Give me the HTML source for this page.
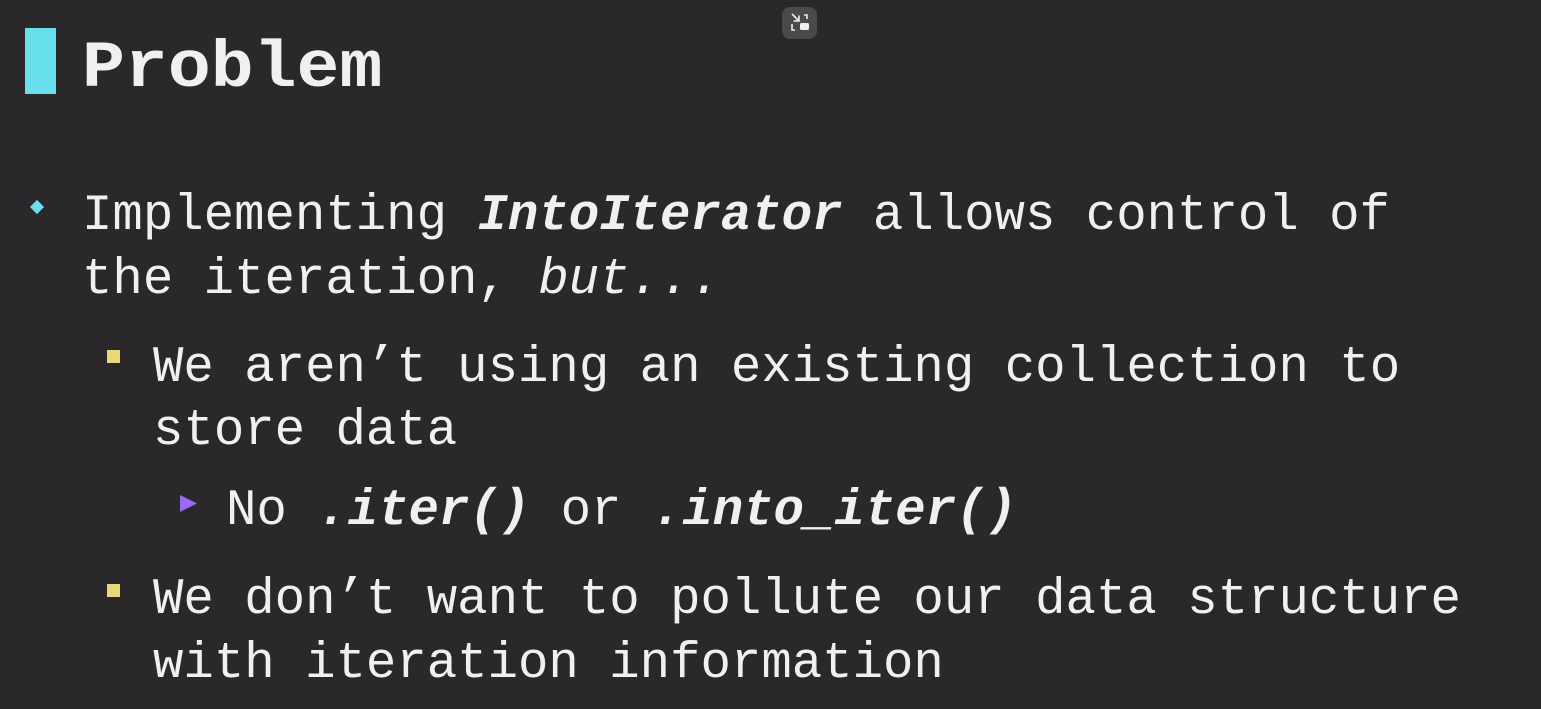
<!DOCTYPE html>
<html><head><meta charset="utf-8"><style>
html,body{margin:0;padding:0}
body{width:1541px;height:709px;background:#2a282b;position:relative;overflow:hidden;font-family:"Liberation Mono",monospace;color:#f2f0ee}
.l{position:absolute;font-size:50.7px;line-height:50px;white-space:pre}
.t{position:absolute;left:82px;top:33px;font-size:71.5px;line-height:70px;font-weight:bold;transform:scaleY(0.92);transform-origin:0 80%}
.bi{font-weight:bold;font-style:italic}
.i{font-style:italic}
</style></head><body>
<div style="position:absolute;left:25px;top:28px;width:31px;height:66px;background:#67e0ec"></div>
<div class="t">Problem</div>
<div style="position:absolute;left:782px;top:7px;width:35px;height:32px;border-radius:8px;background:#4a494b"></div>
<svg style="position:absolute;left:782px;top:7px" width="35" height="32" viewBox="0 0 35 32"><path d="M10 7l7 7M11.5 14H17V8.5M22 8h3v4M10 17v6h3" stroke="#eee" stroke-width="1.6" fill="none"/><rect x="18" y="16" width="9" height="7" rx="1.5" fill="#eee"/></svg>
<div style="position:absolute;left:32px;top:202px;width:10px;height:10px;background:#67e0ec;transform:rotate(45deg)"></div>
<div class="l" style="left:82px;top:192px">Implementing <span class="bi">IntoIterator</span> allows control of</div>
<div class="l" style="left:82px;top:256px">the iteration, <span class="i">but...</span></div>
<div style="position:absolute;left:107px;top:350px;width:13px;height:13px;background:#e8d87a"></div>
<div class="l" style="left:153px;top:344px">We aren’t using an existing collection to</div>
<div class="l" style="left:153px;top:407px">store data</div>
<svg style="position:absolute;left:180px;top:495px" width="18" height="18"><path d="M0 0L17 8.5L0 17Z" fill="#9a6af0"/></svg>
<div class="l" style="left:226px;top:487px">No <span class="bi">.iter()</span> or <span class="bi">.into_iter()</span></div>
<div style="position:absolute;left:107px;top:584px;width:13px;height:13px;background:#e8d87a"></div>
<div class="l" style="left:153px;top:576px">We don’t want to pollute our data structure</div>
<div class="l" style="left:153px;top:640px">with iteration information</div>
</body></html>
